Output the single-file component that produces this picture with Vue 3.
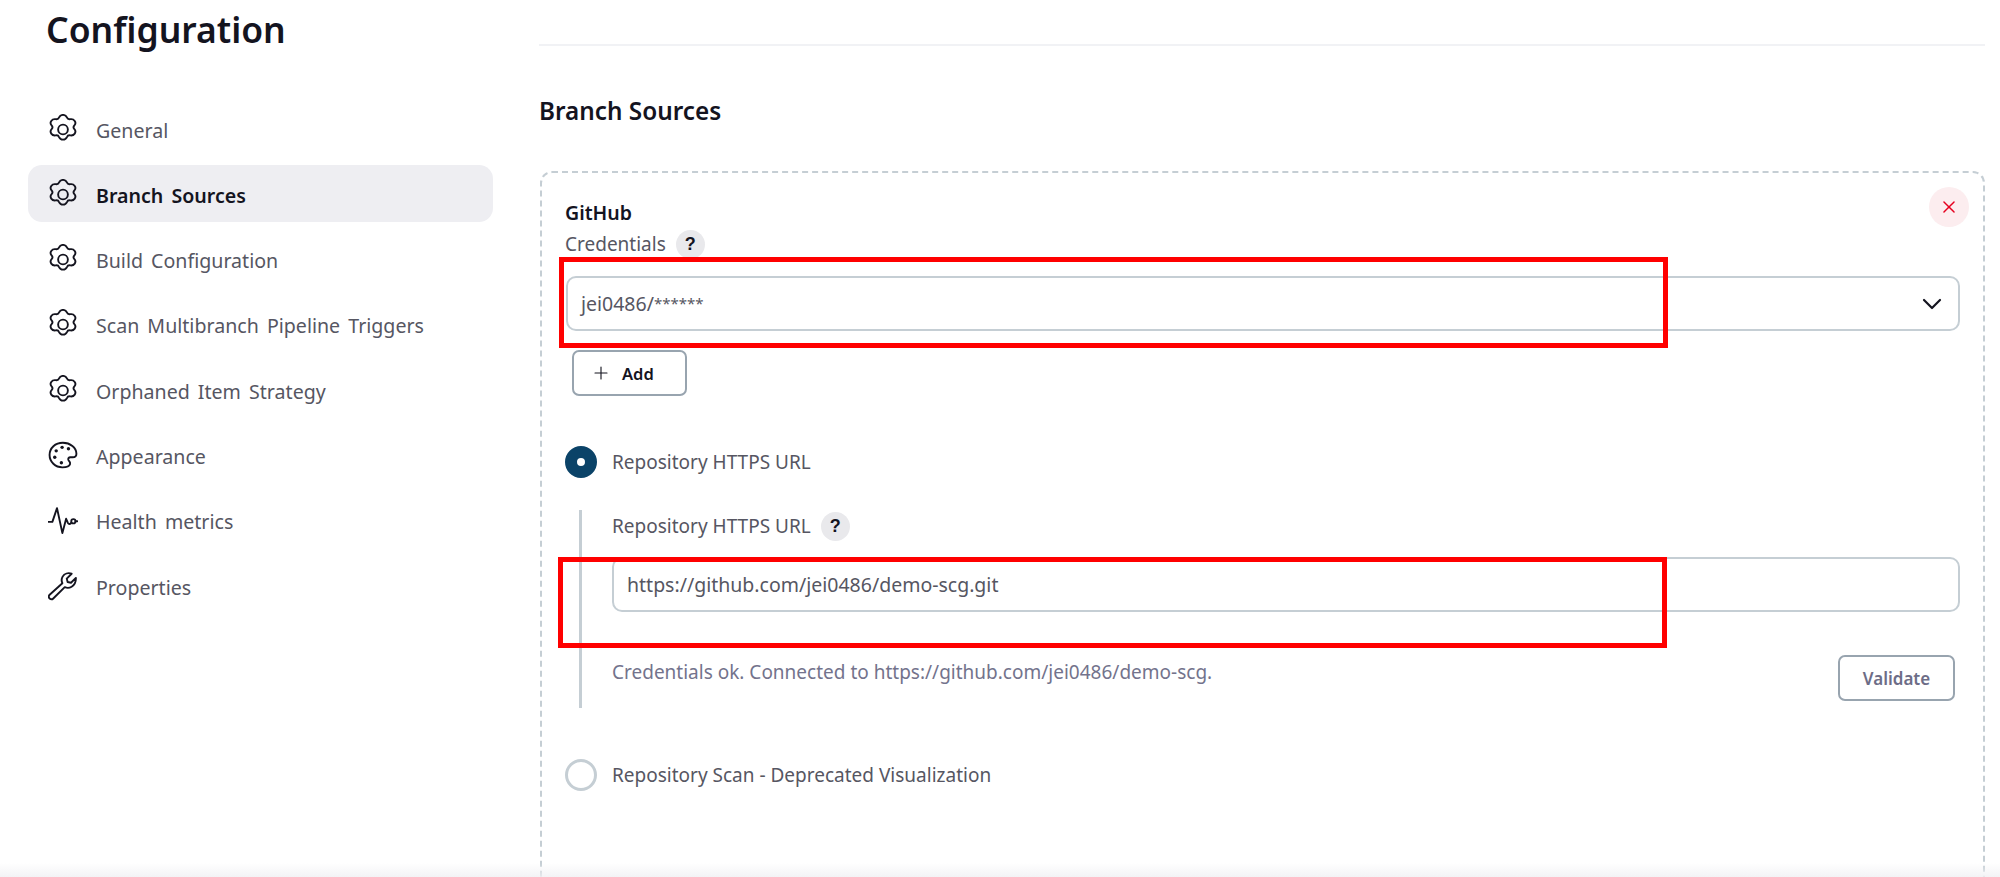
<script setup>
const gear = 'M12 2.600c1.100 0 1.900.6 2.300 1.600.3.8 1.200 1.300 2 1.100 1.100-.2 2 .2 2.600 1.100.6 1 .5 2-.2 2.800-.6.7-.6 1.700 0 2.400.7.8.8 1.800.2 2.800-.6.9-1.500 1.300-2.600 1.100-.8-.2-1.700.3-2 1.100-.4 1-1.200 1.600-2.300 1.600s-1.900-.6-2.300-1.600c-.3-.8-1.200-1.300-2-1.100-1.100.2-2-.2-2.600-1.100-.6-1-.5-2 .2-2.800.6-.7.6-1.700 0-2.400-.7-.8-.8-1.800-.2-2.800.6-.9 1.500-1.300 2.600-1.100.8.2 1.700-.3 2-1.100.4-1 1.200-1.600 2.300-1.600z'
const items = [
  { label: 'General', icon: 'gear' },
  { label: 'Branch Sources', icon: 'gear', active: true },
  { label: 'Build Configuration', icon: 'gear' },
  { label: 'Scan Multibranch Pipeline Triggers', icon: 'gear' },
  { label: 'Orphaned Item Strategy', icon: 'gear' },
  { label: 'Appearance', icon: 'palette' },
  { label: 'Health metrics', icon: 'pulse' },
  { label: 'Properties', icon: 'wrench' }
]
</script>

<template>
  <div class="page">
    <aside class="side">
      <h1 class="title">Configuration</h1>
      <nav class="nav">
        <div v-for="item in items" :key="item.label" class="nav-item" :class="{ active: item.active }">
          <svg class="nav-icon" viewBox="0 0 24 24" fill="none" stroke="#14141f" stroke-width="1.900" stroke-linecap="round" stroke-linejoin="round">
            <template v-if="item.icon === 'gear'">
              <path :d="gear" transform="translate(12 12.400) scale(1.360 1.270) translate(-12 -11.800)" />
              <circle cx="12" cy="12.400" r="3.900" />
            </template>
            <template v-else-if="item.icon === 'palette'">
              <g transform="translate(12 12) scale(1.180) translate(-11.600 -11.500)">
                <path d="M11.500 3.200c5 0 9.200 3.300 9.200 7.400 0 1.600-1.200 2.400-2.500 2.400h-1.600c-1.100 0-1.800 1-1.300 2 .5.900 1.400 1.400 1.100 2.600-.4 1.500-2.900 2.300-5.200 2.300-4.800 0-8.700-3.700-8.700-8.400s3.900-8.300 9-8.300z" />
                <circle cx="7" cy="8.700" r="1.150" fill="#14141f" stroke="none" />
                <circle cx="11" cy="6.300" r="1.150" fill="#14141f" stroke="none" />
                <circle cx="15.300" cy="7.300" r="1.150" fill="#14141f" stroke="none" />
                <circle cx="6" cy="13" r="1.150" fill="#14141f" stroke="none" />
                <circle cx="10.500" cy="16.800" r="1.150" fill="#14141f" stroke="none" />
              </g>
            </template>
            <template v-else-if="item.icon === 'pulse'">
              <path d="M0.500 13.500h3l3.700-11 4.300 20 3-11.500 1.500 3.500c.5 1 2 1 2.600-.3" />
              <circle cx="20.300" cy="13" r="1.700" />
              <path d="M22 13h1.500" />
            </template>
            <template v-else>
              <path d="M22.300 5.500l-3.900 3.900-2.700-.6-.7-2.700 3.900-3.900c-2.700-1-5.800-.2-7.200 2.300-1 1.700-1 3.600-.2 5.300L1.300 19c-.9.900-.9 2.200 0 3 .9.800 2.100.8 2.900 0l9.200-9.100c1.700.8 3.800.7 5.500-.3 2.500-1.500 3.500-4.700 3.400-7.100z" />
            </template>
          </svg>
          <span class="nav-label">{{ item.label }}</span>
        </div>
      </nav>
    </aside>

    <main class="main">
      <div class="rule"></div>
      <h2 class="heading">Branch Sources</h2>
      <section class="card">
        <button class="close" aria-label="Remove">
          <svg viewBox="0 0 24 24" fill="none" stroke="#e6001f" stroke-width="1.600" stroke-linecap="round">
            <path d="M6.500 6.500l11 11M17.500 6.500l-11 11" />
          </svg>
        </button>
        <div class="card-title">GitHub</div>
        <div class="label-row">
          <span class="label">Credentials</span>
          <span class="help">?</span>
        </div>
        <div class="marked first-field">
          <div class="field">
            <span>jei0486/<span class="stars">******</span></span>
            <svg class="chev" viewBox="0 0 24 24" fill="none" stroke="#14141f" stroke-width="2.200" stroke-linecap="round" stroke-linejoin="round">
              <path d="M4 8l8 8 8-8" />
            </svg>
          </div>
          <div class="red red-one"></div>
        </div>
        <button class="btn add">
          <svg viewBox="0 0 24 24" fill="none" stroke="#14141f" stroke-width="1.500" stroke-linecap="round">
            <path d="M12 4v16M4 12h16" />
          </svg>
          <span>Add</span>
        </button>

        <div class="radio-row first">
          <span class="radio on"></span>
          <span class="label">Repository HTTPS URL</span>
        </div>
        <div class="nested">
          <div class="label-row nested-label">
            <span class="label">Repository HTTPS URL</span>
            <span class="help">?</span>
          </div>
          <div class="marked">
            <div class="field url"><span>https://github.com/jei0486/demo-scg.git</span></div>
            <div class="red red-two"></div>
          </div>
          <div class="valid-row">
            <span class="ok">Credentials ok. Connected to https://github.com/jei0486/demo-scg.</span>
            <button class="btn validate">Validate</button>
          </div>
        </div>
        <div class="radio-row second">
          <span class="radio"></span>
          <span class="label">Repository Scan - Deprecated Visualization</span>
        </div>
      </section>
    </main>
    <div class="fade"></div>
  </div>
</template>

<style>
html, body { margin: 0; height: 877px; overflow: hidden; background: #fff; }
</style>

<style scoped>
.page {
  display: grid;
  grid-template-columns: 538px 1fr;
  height: 877px;
  overflow: hidden;
  font-family: "Noto Sans", "Open Sans", sans-serif;
  color: #14141f;
  position: relative;
}
.side { padding-left: 28px; }
.title {
  margin: 0 0 0 18px;
  padding-top: 4px;
  font-size: 35.500px;
  line-height: 50px;
  font-weight: 600;
  color: #14141f;
}
.nav { margin-top: 46px; width: 465px; display: flex; flex-direction: column; }
.nav-item {
  height: 57px;
  margin-bottom: 8.300px;
  display: flex;
  align-items: center;
  padding-left: 20px;
  border-radius: 14px;
  font-size: 19.600px;
  word-spacing: 3px;
  color: #565662;
}
.nav-item.active { background: #eeeef2; color: #14141f; font-weight: 600; }
.nav-icon { width: 30px; height: 30px; flex: none; margin-right: 18px; }
.nav-icon path, .nav-icon circle { vector-effect: non-scaling-stroke; }
.nav-label { white-space: nowrap; padding-top: 3px; }
.main { padding-right: 15px; }
.rule { height: 2px; background: #f1f2f5; margin: 44px 0 0 1px; }
.heading {
  margin: 48px 0 0 1px;
  font-size: 24.300px;
  line-height: 34px;
  font-weight: 600;
}
.card {
  position: relative;
  box-sizing: border-box;
  margin-top: 43px;
  margin-left: 2px;
  height: 760px;
  border: 2px dashed #c5ced4;
  border-radius: 12px;
  padding: 26px 23px 0 23px;
}
.close {
  position: absolute;
  top: 14px;
  right: 14px;
  width: 40px;
  height: 40px;
  padding: 9px;
  border: none;
  border-radius: 50%;
  background: #fcedef;
}
.close svg { display: block; width: 22px; height: 22px; }
.card-title { font-size: 19.500px; line-height: 28px; font-weight: 600; }
.label-row { display: flex; align-items: center; gap: 10px; height: 30px; margin-top: 2px; }
.label { font-size: 19px; line-height: 30px; color: #565662; white-space: nowrap; }
.help {
  width: 29px;
  height: 29px;
  border-radius: 50%;
  background: #e9e9ec;
  font-family: "Liberation Sans", sans-serif;
  font-weight: 700;
  font-size: 18px;
  line-height: 29px;
  text-align: center;
  color: #14141f;
}
.marked { position: relative; margin-top: 17px; }
.first-field { margin-left: 1px; }
.field {
  box-sizing: border-box;
  height: 55px;
  border: 2px solid #c5ced4;
  border-radius: 10px;
  display: flex;
  align-items: center;
  justify-content: space-between;
  padding: 0 13px;
  font-size: 19.500px;
  color: #565662;
}
.stars { font-size: 15px; vertical-align: 2px; }
.chev { width: 24px; height: 24px; margin-right: 1px; }
.red { position: absolute; border: 5px solid #ff0000; width: 1109px; box-sizing: border-box; pointer-events: none; }
.red-one { top: -19px; left: -7px; height: 91px; }
.red-two { top: 0; left: -54px; height: 91px; }
.btn {
  box-sizing: border-box;
  background: #fff;
  border: 2px solid #98a4af;
  border-radius: 7px;
  font-family: inherit;
  font-weight: 600;
  height: 46px;
}
.add {
  margin: 19px 0 0 7px;
  width: 115px;
  display: flex;
  align-items: center;
  gap: 12px;
  padding: 0 0 0 18px;
  font-size: 16.500px;
  color: #14141f;
}
.add svg { width: 18px; height: 18px; flex: none; }
.radio-row { display: flex; align-items: center; gap: 15px; height: 32px; }
.radio-row.first { margin-top: 50px; }
.radio-row.second { margin-top: 51px; }
.radio {
  box-sizing: border-box;
  width: 32px;
  height: 32px;
  border-radius: 50%;
  border: 3px solid #c5ced4;
  flex: none;
}
.radio.on { border: 12px solid #0b4368; background: #fff; }
.nested {
  margin: 32px 0 0 14px;
  border-left: 3px solid #c5ced4;
  height: 197px;
  padding-left: 30px;
  padding-top: 1px;
}
.nested-label { height: 30px; margin-top: 0; }
.nested .marked { margin-top: 16px; }
.url { padding-left: 13px; }
.valid-row { display: flex; justify-content: space-between; align-items: flex-start; margin-top: 43px; padding-right: 5px; position: relative; }
.ok { font-size: 19px; line-height: 28px; color: #73738c; margin-top: 3px; }
.validate { width: 117px; font-size: 17px; color: #6d6d87; }
.fade {
  position: absolute;
  left: 0;
  right: 0;
  bottom: 0;
  height: 14px;
  background: linear-gradient(to bottom, rgba(240, 240, 243, 0), rgba(240, 240, 243, 0.8));
}
</style>
